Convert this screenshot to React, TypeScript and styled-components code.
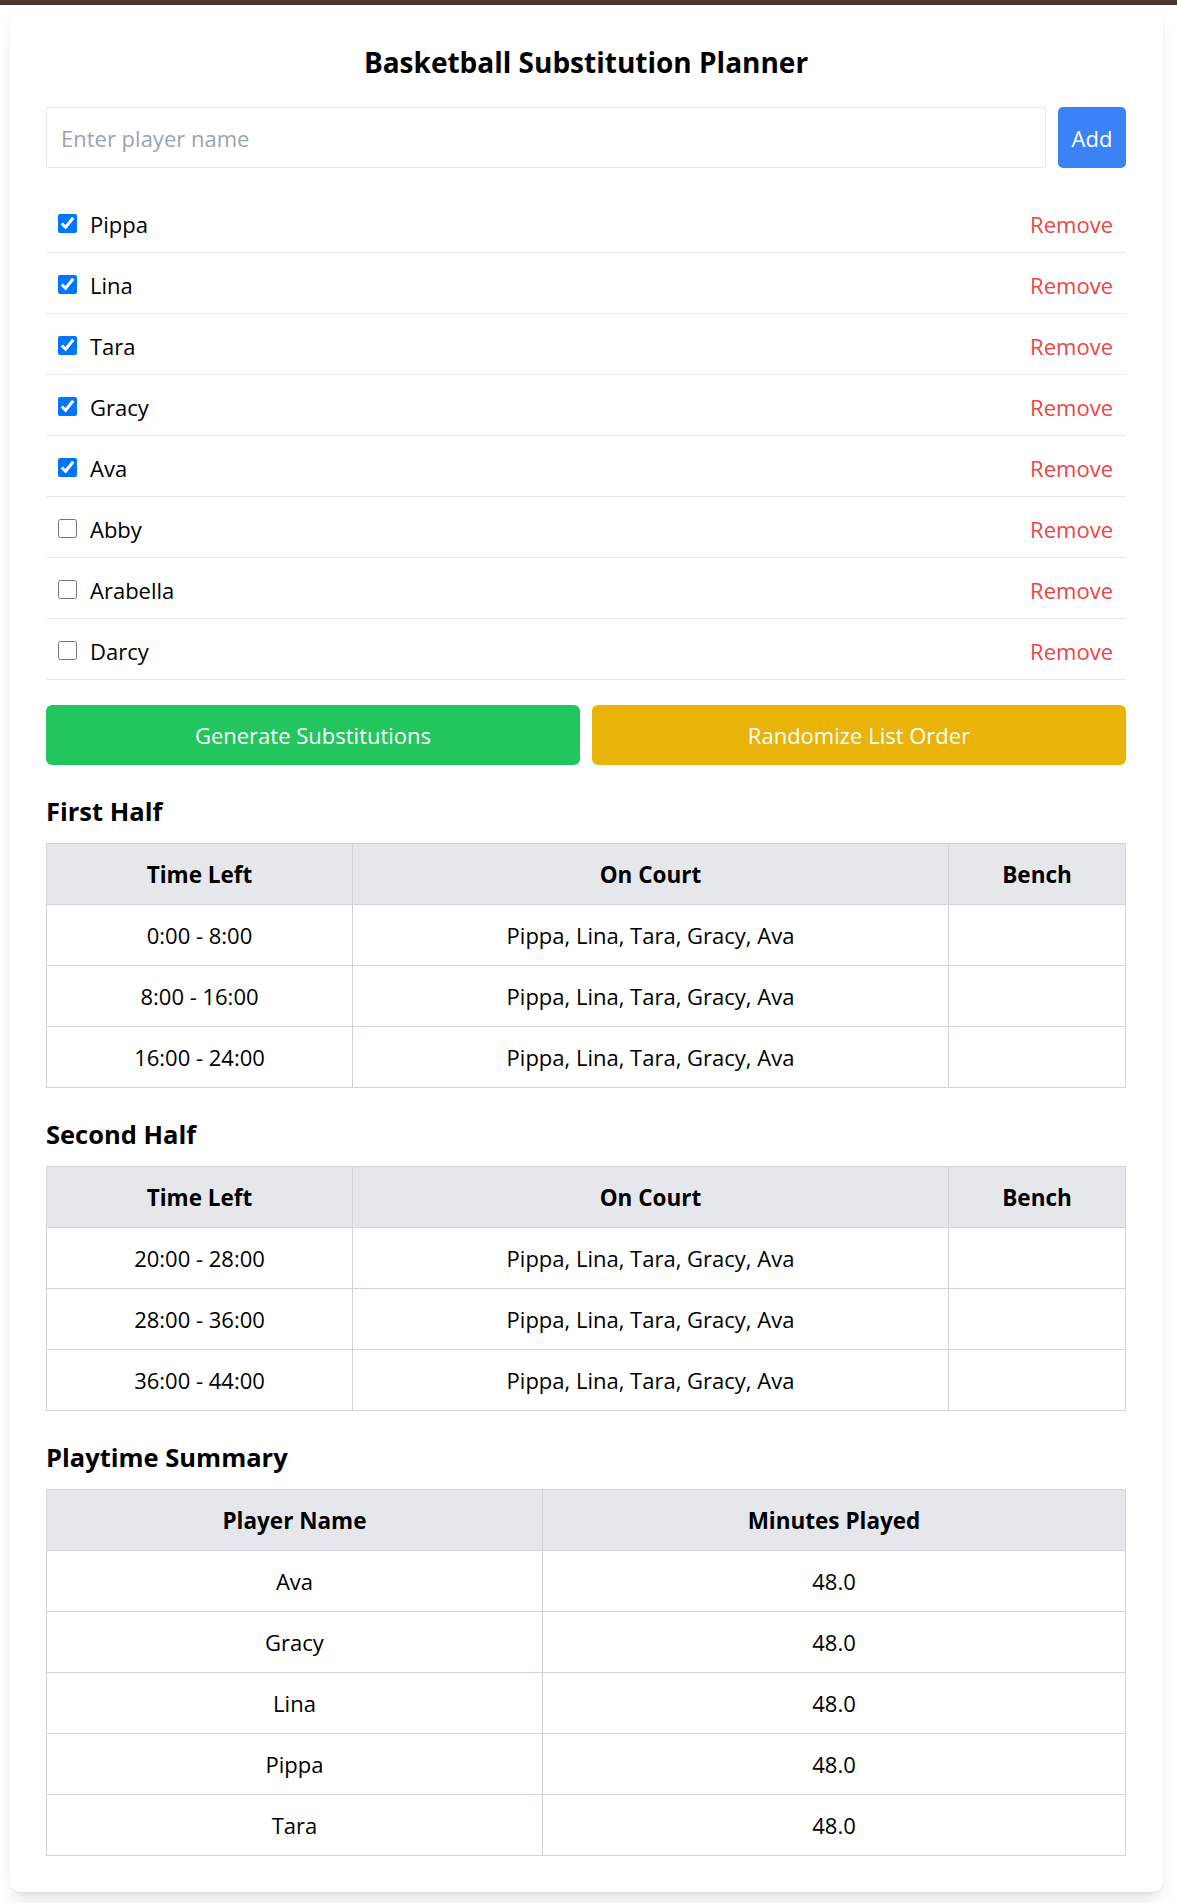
import React, { useState } from "react";
import styled, { createGlobalStyle } from "styled-components";

const GlobalStyle = createGlobalStyle`
  html, body {
    margin: 0;
    padding: 0;
    background: #ffffff;
  }
  body {
    font-family: "Open Sans", "Noto Sans", Arial, sans-serif;
    color: #000000;
  }
  *, *::before, *::after {
    box-sizing: border-box;
  }
`;

const TopStrip = styled.div`
  height: 5px;
  background: #4b342b;
`;

const Page = styled.div`
  padding: 6px 14px 12px 10px;
`;

const Card = styled.main`
  background: #ffffff;
  border-radius: 10px;
  box-shadow: 0 12px 18px -4px rgba(0, 0, 0, 0.1), 0 5px 7px -5px rgba(0, 0, 0, 0.1),
    0 0 3px rgba(0, 0, 0, 0.04);
  padding: 36px 37px 36px 36px;
`;

const Title = styled.h1`
  margin: 0 0 29px;
  font-size: 28px;
  line-height: 31px;
  font-weight: 700;
  text-align: center;
`;

const InputRow = styled.div`
  display: flex;
  gap: 12px;
  margin-bottom: 24px;
`;

const NameInput = styled.input`
  flex: 1;
  height: 61px;
  border: 1px solid #e5e7eb;
  border-radius: 2px;
  padding: 0 14px;
  font-family: inherit;
  font-size: 22px;
  color: #000;
  outline: none;
  &::placeholder {
    color: #9ca3af;
  }
`;

const AddButton = styled.button`
  width: 68px;
  height: 61px;
  border: none;
  border-radius: 5px;
  background: #3b82f6;
  color: #ffffff;
  font-family: inherit;
  font-size: 22px;
  padding: 0;
  cursor: pointer;
`;

const PlayerList = styled.ul`
  list-style: none;
  margin: 0;
  padding: 0;
`;

const PlayerRow = styled.li`
  display: flex;
  align-items: center;
  justify-content: space-between;
  height: 61px;
  border-bottom: 1px solid #e5e7eb;
  padding: 3px 13px 0 12px;
`;

const PlayerLabel = styled.label`
  display: flex;
  align-items: center;
  gap: 13px;
  font-size: 22px;
  cursor: pointer;
`;

const Check = styled.input`
  width: 19px;
  height: 19px;
  margin: 0;
  accent-color: #0075ff;
`;

const RemoveButton = styled.button`
  border: none;
  background: none;
  padding: 0;
  color: #ef4444;
  font-family: inherit;
  font-size: 22px;
  cursor: pointer;
`;

const ActionRow = styled.div`
  display: grid;
  grid-template-columns: 1fr 1fr;
  gap: 12px;
  margin-top: 25px;
`;

const ActionButton = styled.button<{ $tone: "green" | "yellow" }>`
  height: 60px;
  border: none;
  border-radius: 6px;
  background: ${(p) => (p.$tone === "green" ? "#22c55e" : "#eab308")};
  color: #ffffff;
  font-family: inherit;
  font-size: 22px;
  cursor: pointer;
`;

const SectionTitle = styled.h2`
  margin: 25px 0 11px;
  font-size: 25.5px;
  line-height: 42px;
  font-weight: 700;
`;

const Table = styled.table`
  width: 100%;
  border-collapse: collapse;
  table-layout: fixed;
  border: 1px solid #d1d5db;
`;

const HeadCell = styled.th`
  height: 61px;
  padding: 0 12px;
  border: 1px solid #d1d5db;
  background: #e5e7eb;
  font-size: 22.5px;
  font-weight: 700;
  text-align: center;
`;

const Cell = styled.td`
  height: 61px;
  padding: 0 12px;
  border: 1px solid #d1d5db;
  font-size: 22px;
  text-align: center;
`;

type Player = { name: string; active: boolean };

const initialPlayers: Player[] = [
  { name: "Pippa", active: true },
  { name: "Lina", active: true },
  { name: "Tara", active: true },
  { name: "Gracy", active: true },
  { name: "Ava", active: true },
  { name: "Abby", active: false },
  { name: "Arabella", active: false },
  { name: "Darcy", active: false },
];

const onCourt = "Pippa, Lina, Tara, Gracy, Ava";

const firstHalf = ["0:00 - 8:00", "8:00 - 16:00", "16:00 - 24:00"];
const secondHalf = ["20:00 - 28:00", "28:00 - 36:00", "36:00 - 44:00"];

const summary = [
  { name: "Ava", minutes: "48.0" },
  { name: "Gracy", minutes: "48.0" },
  { name: "Lina", minutes: "48.0" },
  { name: "Pippa", minutes: "48.0" },
  { name: "Tara", minutes: "48.0" },
];

function ScheduleTable({ slots }: { slots: string[] }) {
  return (
    <Table>
      <colgroup>
        <col style={{ width: "306px" }} />
        <col style={{ width: "596px" }} />
        <col />
      </colgroup>
      <thead>
        <tr>
          <HeadCell>Time Left</HeadCell>
          <HeadCell>On Court</HeadCell>
          <HeadCell>Bench</HeadCell>
        </tr>
      </thead>
      <tbody>
        {slots.map((s) => (
          <tr key={s}>
            <Cell>{s}</Cell>
            <Cell>{onCourt}</Cell>
            <Cell></Cell>
          </tr>
        ))}
      </tbody>
    </Table>
  );
}

export default function App() {
  const [players, setPlayers] = useState<Player[]>(initialPlayers);
  const [name, setName] = useState("");

  const toggle = (i: number) =>
    setPlayers((ps) => ps.map((p, j) => (j === i ? { ...p, active: !p.active } : p)));
  const remove = (i: number) => setPlayers((ps) => ps.filter((_, j) => j !== i));
  const add = () => {
    if (!name.trim()) return;
    setPlayers((ps) => [...ps, { name: name.trim(), active: false }]);
    setName("");
  };

  return (
    <>
      <GlobalStyle />
      <TopStrip />
      <Page>
        <Card>
          <Title>Basketball Substitution Planner</Title>
          <InputRow>
            <NameInput
              placeholder="Enter player name"
              value={name}
              onChange={(e) => setName(e.target.value)}
            />
            <AddButton onClick={add}>Add</AddButton>
          </InputRow>
          <PlayerList>
            {players.map((p, i) => (
              <PlayerRow key={p.name + i}>
                <PlayerLabel>
                  <Check type="checkbox" checked={p.active} onChange={() => toggle(i)} />
                  {p.name}
                </PlayerLabel>
                <RemoveButton onClick={() => remove(i)}>Remove</RemoveButton>
              </PlayerRow>
            ))}
          </PlayerList>
          <ActionRow>
            <ActionButton $tone="green">Generate Substitutions</ActionButton>
            <ActionButton $tone="yellow">Randomize List Order</ActionButton>
          </ActionRow>

          <SectionTitle>First Half</SectionTitle>
          <ScheduleTable slots={firstHalf} />

          <SectionTitle>Second Half</SectionTitle>
          <ScheduleTable slots={secondHalf} />

          <SectionTitle>Playtime Summary</SectionTitle>
          <Table>
            <colgroup>
              <col style={{ width: "496px" }} />
              <col />
            </colgroup>
            <thead>
              <tr>
                <HeadCell>Player Name</HeadCell>
                <HeadCell>Minutes Played</HeadCell>
              </tr>
            </thead>
            <tbody>
              {summary.map((s) => (
                <tr key={s.name}>
                  <Cell>{s.name}</Cell>
                  <Cell>{s.minutes}</Cell>
                </tr>
              ))}
            </tbody>
          </Table>
        </Card>
      </Page>
    </>
  );
}
